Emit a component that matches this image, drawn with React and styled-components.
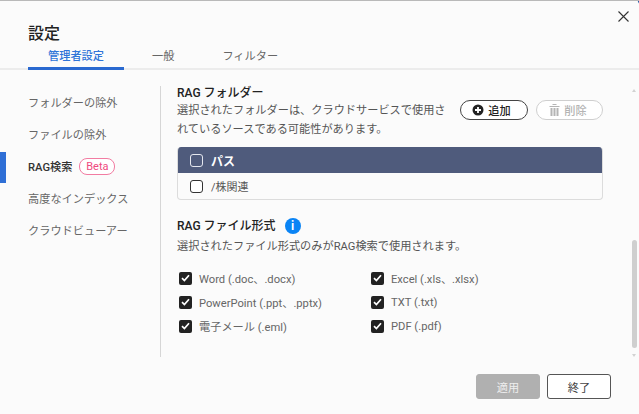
import React from "react";
import styled, { createGlobalStyle } from "styled-components";

const GlobalStyle = createGlobalStyle`
  html, body { margin: 0; padding: 0; background: #fbfbfb; }
  body { font-family: Roboto, "Noto Sans CJK JP", sans-serif; }
`;

const tabs = ["管理者設定", "一般", "フィルター"];
const sideItems = ["フォルダーの除外", "ファイルの除外", "RAG検索", "高度なインデックス", "クラウドビューアー"];
const formats = [
  "Word (.doc、.docx)",
  "Excel (.xls、.xlsx)",
  "PowerPoint (.ppt、.pptx)",
  "TXT (.txt)",
  "電子メール (.eml)",
  "PDF (.pdf)",
];

const CheckMark = () => (
  <svg width="9" height="8" viewBox="0 0 9 8" fill="none">
    <path d="M1 4.2 L3.4 6.6 L8 1.2" stroke="#fff" strokeWidth="1.7" />
  </svg>
);

const PlusIcon = () => (
  <svg width="12" height="12" viewBox="0 0 12 12">
    <circle cx="6" cy="6" r="5.5" fill="#222" />
    <path d="M6 3v6M3 6h6" stroke="#fff" strokeWidth="1.8" />
  </svg>
);

const TrashIcon = () => (
  <svg width="11" height="12" viewBox="0 0 11 12" fill="#b4b4b4">
    <rect x="3.5" y="0" width="4" height="1" />
    <rect x="0.5" y="2" width="10" height="1" />
    <rect x="1.5" y="4" width="2" height="8" />
    <rect x="4.5" y="4" width="2" height="8" />
    <rect x="7.5" y="4" width="2" height="8" />
  </svg>
);

const App = () => (
  <>
    <GlobalStyle />
    <Dialog>
      <CornerTint />
      <CloseButton aria-label="close">
        <svg width="11" height="11" viewBox="0 0 11 11" fill="none">
          <path d="M0.5 0.5 L10.5 10.5 M10.5 0.5 L0.5 10.5" stroke="#333" strokeWidth="1.1" />
        </svg>
      </CloseButton>
      <Header>
        <Title>設定</Title>
        <TabBar>
          {tabs.map((t, i) => (
            <Tab key={t} $active={i === 0}>{t}</Tab>
          ))}
        </TabBar>
      </Header>

      <Body>
        <Sidebar>
          {sideItems.map((s, i) => (
            <SideItem key={s} $active={i === 2}>
              {s}
              {i === 2 && <BetaTag>Beta</BetaTag>}
            </SideItem>
          ))}
        </Sidebar>

        <Content>
          <Heading>RAG フォルダー</Heading>
          <FolderIntro>
            <Description>
              選択されたフォルダーは、クラウドサービスで使用されているソースである可能性があります。
            </Description>
            <PillButton>
              <PlusIcon />
              追加
            </PillButton>
            <PillButton $disabled>
              <TrashIcon />
              削除
            </PillButton>
          </FolderIntro>

          <Table>
            <TableHead>
              <Box $light />
              パス
            </TableHead>
            <TableRow>
              <Box />
              /株関連
            </TableRow>
          </Table>

          <FormatHeading>
            RAG ファイル形式
            <InfoBadge>i</InfoBadge>
          </FormatHeading>
          <FormatDescription>選択されたファイル形式のみがRAG検索で使用されます。</FormatDescription>

          <FormatGrid>
            {formats.map((f) => (
              <FormatItem key={f}>
                <CheckedBox>
                  <CheckMark />
                </CheckedBox>
                {f}
              </FormatItem>
            ))}
          </FormatGrid>
        </Content>

        <ScrollTrack>
          <ArrowUp />
          <ScrollThumb />
          <ArrowDown />
        </ScrollTrack>
      </Body>

      <Footer>
        <FooterButton $primary>適用</FooterButton>
        <FooterButton>終了</FooterButton>
      </Footer>
    </Dialog>
  </>
);

export default App;

const Dialog = styled.div`
  position: relative;
  width: 639px;
  height: 414px;
  box-sizing: border-box;
  border-top: 1px solid #b9b9b9;
  background: #fbfbfb;
  overflow: hidden;
  display: flex;
  flex-direction: column;
`;

const CornerTint = styled.div`
  position: absolute;
  top: -1px;
  right: 0;
  width: 4px;
  height: 4px;
  background: radial-gradient(circle at 0 100%, transparent 3.5px, #2a5ea8 4px);
`;

const CloseButton = styled.button`
  position: absolute;
  top: 10px;
  right: 10px;
  padding: 0;
  width: 11px;
  height: 11px;
  border: none;
  background: none;
  display: flex;
`;

const Header = styled.div`
  height: 69px;
  box-sizing: border-box;
  padding: 23px 0 0 28px;
  border-bottom: 2px solid #ececec;
  display: flex;
  flex-direction: column;
`;

const Title = styled.div`
  font-size: 16px;
  line-height: 20px;
  font-weight: 500;
  color: #222;
`;

const TabBar = styled.div`
  display: flex;
  margin-top: 3px;
  margin-bottom: -2px;
`;

const Tab = styled.div`
  width: ${(p) => (p.$active ? "96px" : "auto")};
  height: 23px;
  box-sizing: border-box;
  margin-right: ${(p) => (p.$active ? "28px" : "48px")};
  text-align: center;
  font-size: 11.2px;
  line-height: 20px;
  color: ${(p) => (p.$active ? "#2f74d8" : "#666")};
  font-weight: ${(p) => (p.$active ? 500 : 400)};
  border-bottom: ${(p) => (p.$active ? "3px solid #2a69d0" : "none")};
`;

const Body = styled.div`
  position: relative;
  flex: 1;
  display: flex;
  min-height: 0;
`;

const Sidebar = styled.div`
  width: 161px;
  height: 271px;
  margin-top: 16px;
  box-sizing: border-box;
  border-right: 1px solid #d6d6d6;
  flex-shrink: 0;
`;

const SideItem = styled.div`
  position: relative;
  height: 32px;
  display: flex;
  align-items: center;
  padding-left: 28px;
  font-size: 11.2px;
  color: ${(p) => (p.$active ? "#333" : "#666")};
  font-weight: ${(p) => (p.$active ? 500 : 400)};

  &::before {
    content: "";
    display: ${(p) => (p.$active ? "block" : "none")};
    position: absolute;
    left: 0;
    top: 2px;
    width: 6px;
    height: 31px;
    background: #2f6fd6;
  }
`;

const BetaTag = styled.span`
  margin-left: 7px;
  width: 36px;
  height: 17px;
  box-sizing: border-box;
  display: inline-flex;
  align-items: center;
  justify-content: center;
  border: 1px solid #f27ca2;
  border-radius: 8px;
  font-size: 11px;
  font-weight: 400;
  color: #ef4a80;
  background: #fff;
`;

const Content = styled.div`
  width: 426px;
  padding: 15px 0 0 16px;
  flex-shrink: 0;
`;

const Heading = styled.div`
  font-size: 12px;
  line-height: 16px;
  font-weight: 500;
  color: #222;
`;

const FolderIntro = styled.div`
  display: flex;
  align-items: flex-start;
  margin-top: -1px;
`;

const Description = styled.div`
  width: 269px;
  margin-right: 14px;
  padding-top: 1px;
  font-size: 11.2px;
  line-height: 19px;
  color: #555;
`;

const PillButton = styled.button`
  width: 68px;
  height: 20px;
  margin: 0 8px 0 0;
  padding: 0 5px 0 0;
  flex-shrink: 0;
  box-sizing: border-box;
  border-radius: 10px;
  border: 1px solid ${(p) => (p.$disabled ? "#cfcfcf" : "#444")};
  background: #fff;
  display: flex;
  align-items: center;
  justify-content: center;
  gap: 4px;
  font-family: inherit;
  font-size: 11.2px;
  font-weight: 500;
  color: ${(p) => (p.$disabled ? "#b4b4b4" : "#222")};

  &:last-child {
    margin-right: 0;
    padding-right: 3px;
    width: 67px;
  }
`;

const Table = styled.div`
  margin-top: 8px;
  border-radius: 4px;
  overflow: hidden;
  border: 1px solid #dcdcdc;
  border-top: none;
`;

const TableHead = styled.div`
  height: 26px;
  margin: 0 -1px;
  background: #4f5b7c;
  display: flex;
  align-items: center;
  gap: 8px;
  padding-left: 13px;
  font-size: 12px;
  font-weight: 700;
  color: #fff;
`;

const TableRow = styled.div`
  height: 26px;
  display: flex;
  align-items: center;
  gap: 8px;
  padding-left: 12px;
  font-size: 11px;
  color: #555;
`;

const Box = styled.span`
  width: 13px;
  height: 13px;
  box-sizing: border-box;
  border-radius: 3px;
  border: 1.5px solid ${(p) => (p.$light ? "#e4e7ef" : "#333")};
  background: ${(p) => (p.$light ? "transparent" : "#fff")};
`;

const FormatHeading = styled(Heading)`
  margin-top: 18px;
  display: flex;
  align-items: center;
  gap: 9px;
`;

const InfoBadge = styled.span`
  width: 16px;
  height: 16px;
  border-radius: 50%;
  background: #0a84f5;
  color: #fff;
  font-size: 12px;
  font-weight: 700;
  line-height: 16px;
  text-align: center;
`;

const FormatDescription = styled(Description)`
  width: auto;
  margin: 3px 0 0;
  padding-top: 0;
`;

const FormatGrid = styled.div`
  margin-top: 10px;
  padding-left: 2px;
  display: grid;
  grid-template-columns: 192px 1fr;
  grid-auto-rows: 24px;
`;

const FormatItem = styled.div`
  display: flex;
  align-items: center;
  gap: 7px;
  font-size: 11.2px;
  color: #666;
`;

const CheckedBox = styled.span`
  width: 13px;
  height: 13px;
  border-radius: 2px;
  background: #222;
  display: flex;
  align-items: center;
  justify-content: center;
`;

const ScrollTrack = styled.div`
  position: absolute;
  top: 0;
  right: 2px;
  width: 5px;
  height: 290px;
`;

const ScrollThumb = styled.div`
  position: absolute;
  top: 170px;
  left: 0;
  width: 5px;
  height: 108px;
  border-radius: 3px;
  background: #cfcfcf;
`;

const ArrowUp = styled.div`
  position: absolute;
  top: 19px;
  left: 0;
  border-left: 2.5px solid transparent;
  border-right: 2.5px solid transparent;
  border-bottom: 3px solid #d2d2d2;
`;

const ArrowDown = styled.div`
  position: absolute;
  top: 284px;
  left: 0;
  border-left: 2.5px solid transparent;
  border-right: 2.5px solid transparent;
  border-top: 3px solid #d2d2d2;
`;

const Footer = styled.div`
  display: flex;
  justify-content: flex-end;
  gap: 7px;
  padding: 0 28px 15px 0;
`;

const FooterButton = styled.button`
  width: 64px;
  height: 25px;
  box-sizing: border-box;
  border-radius: 3px;
  padding: 0;
  border: 1px solid ${(p) => (p.$primary ? "#b0b0b0" : "#555")};
  background: ${(p) => (p.$primary ? "#b0b0b0" : "#fff")};
  color: ${(p) => (p.$primary ? "#eee" : "#444")};
  font-family: inherit;
  font-size: 11.2px;
`;
